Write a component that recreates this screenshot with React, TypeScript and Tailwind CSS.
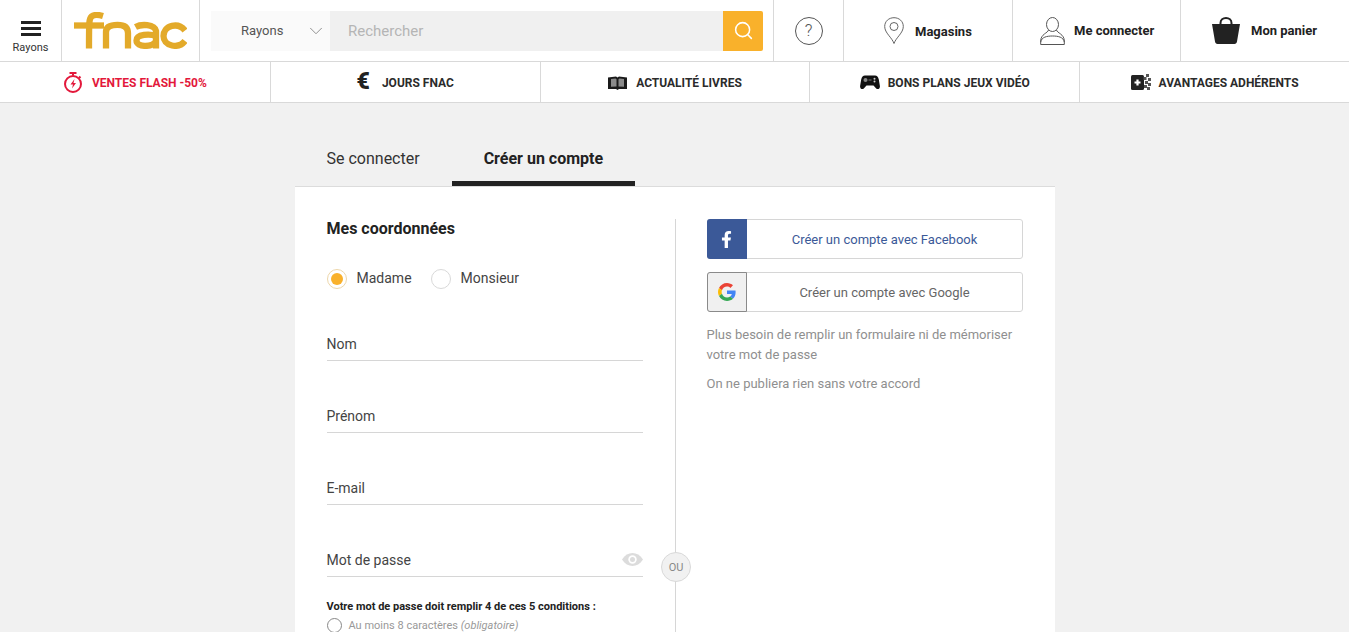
import { ChevronDown, Search } from "lucide-react";
import { FaFacebookF } from "react-icons/fa";

function FnacLogo() {
  return (
    <svg width="113" height="37" viewBox="0 0 113 37" fill="none" stroke="#e3aa2a" strokeWidth="6.300">
      {/* f */}
      <path d="M29 4 C25 2.800 20 2.500 17.500 4.500 C15 6.500 15 10 15 36.500" />
      <path d="M0 13.500 L30 13.500" />
      {/* n */}
      <path d="M32 36.500 L32 20 C32 14 38 12.800 43.500 12.800 C49 12.800 54 14.500 54 21 L54 36.500" />
      {/* a */}
      <path d="M61.500 15 C67 12 80.500 11.800 82 19 L82 36.500" />
      <path d="M82 24 C76 21.800 62.500 22 62.500 28.500 C62.500 35.500 78 35.500 82 29.500" />
      {/* c */}
      <path d="M111 18.500 C108 14.500 103 12.800 98 13.800 C92.500 15 89.500 19.500 89.500 24 C89.500 28.500 92.500 32.500 98 33.500 C103 34.500 108 33 111 29" />
    </svg>
  );
}

function PinIcon() {
  return (
    <svg width="20" height="27" viewBox="0 0 20 27" fill="none" stroke="#666" strokeWidth="1">
      <path d="M10 26.500 C8 20.500 .700 16 .700 9.500 C.700 4.300 4.800 .700 10 .700 C15.200 .700 19.300 4.300 19.300 9.500 C19.300 16 12 20.500 10 26.500 Z" />
      <circle cx="10" cy="9.500" r="4" />
    </svg>
  );
}

function UserIcon() {
  return (
    <svg width="25" height="28" viewBox="0 0 25 28" fill="none" stroke="#555" strokeWidth="1">
      <ellipse cx="12.500" cy="7.500" rx="6" ry="7" />
      <path d="M8.500 13 C8 16 .700 17 .700 24 L.700 27.500 L24.300 27.500 L24.300 24 C24.300 17 17 16 16.500 13" />
      <path d="M.700 25 C1.500 20 7 19 12.500 19 C18 19 23.500 20 24.300 25" />
    </svg>
  );
}

function BagIcon() {
  return (
    <svg width="28" height="27" viewBox="0 0 28 27" fill="none">
      <path d="M8.500 9 L8.500 6 C8.500 2.800 11 1 14 1 C17 1 19.500 2.800 19.500 6 L19.500 9" stroke="#222" strokeWidth="2" />
      <path d="M0 7 L28 7 L25 24.500 C24.800 26 23.800 27 22.500 27 L5.500 27 C4.200 27 3.200 26 3 24.500 Z" fill="#222" />
    </svg>
  );
}

function FlashIcon() {
  return (
    <svg width="20" height="21" viewBox="0 0 20 21" fill="none" stroke="#e3183b" strokeWidth="2">
      <path d="M6.500 1 L13.500 1 M10 1 L10 3.500 M16 4.500 L17.500 6" />
      <circle cx="10" cy="12" r="8" />
      <path d="M11.500 7 L7.500 12.500 L10 12.500 L9 16.500 L13 11 L10.500 11 Z" fill="#e3183b" stroke="none" />
    </svg>
  );
}

function BookIcon() {
  return (
    <svg width="19" height="14" viewBox="0 0 19 14">
      <path d="M0 1.500 L8 .500 L9.500 1.500 L11 .500 L19 1.500 L19 13 L11 13 L9.500 14 L8 13 L0 13 Z" fill="#1a1a1a" />
      <path d="M3 3 L7.500 2.500 L8.500 3.200 L8.500 10.500 L3 10.800 Z M16 3 L11.500 2.500 L10.500 3.200 L10.500 10.500 L16 10.800 Z" fill="#8a8a8a" />
    </svg>
  );
}

function GamepadIcon() {
  return (
    <svg width="20" height="15" viewBox="0 0 20 15">
      <path d="M5 .500 L15 .500 C17 .500 18.200 2 18.800 4.500 L19.900 11 C20.200 13.500 18 15 16.200 13.500 L13.500 10.500 L6.500 10.500 L3.800 13.500 C2 15 -.200 13.500 .100 11 L1.200 4.500 C1.800 2 3 .500 5 .500 Z" fill="#111" />
      <circle cx="5.500" cy="5" r="2" fill="#888" />
      <circle cx="14.500" cy="3.800" r="1" fill="#ccc" />
      <circle cx="14.500" cy="6.500" r="1" fill="#ccc" />
      <rect x="8.500" y="4.500" width="3" height="1" fill="#777" />
    </svg>
  );
}

function AdherentIcon() {
  return (
    <svg width="20" height="17" viewBox="0 0 20 17">
      <rect x="0" y="1" width="13" height="15" rx="1.500" fill="#222" />
      <path d="M3.500 8.500 L9.500 8.500 M6.500 5.500 L6.500 11.500" stroke="#fff" strokeWidth="2.200" />
      <g fill="#555">
        <rect x="15" y="0" width="3" height="3" />
        <rect x="12.500" y="3" width="3" height="3" />
        <rect x="17" y="4" width="3" height="3" />
        <rect x="14" y="7" width="3" height="3" />
        <rect x="17" y="9" width="3" height="3" />
        <rect x="13" y="11" width="3" height="3" />
        <rect x="16" y="13" width="3" height="3" />
      </g>
    </svg>
  );
}

function EyeIcon() {
  return (
    <svg width="21" height="13" viewBox="0 0 21 13">
      <path d="M0 6.500 C3 2 6.500 0 10.500 0 C14.500 0 18 2 21 6.500 C18 11 14.500 13 10.500 13 C6.500 13 3 11 0 6.500 Z" fill="#dcdcdc" />
      <circle cx="10.500" cy="6.500" r="4.200" fill="#fff" />
      <circle cx="10.500" cy="6.500" r="2.500" fill="#dcdcdc" />
    </svg>
  );
}

function GoogleIcon() {
  return (
    <svg width="18" height="18" viewBox="0 0 48 48">
      <path fill="#EA4335" d="M24 9.500c3.500 0 6.700 1.300 9.100 3.500l6.800-6.800C35.800 2.400 30.200 0 24 0 14.600 0 6.500 5.400 2.600 13.200l7.900 6.200C12.400 13.600 17.700 9.500 24 9.500z" />
      <path fill="#4285F4" d="M47 24.500c0-1.600-.1-3.100-.4-4.500H24v9h12.900c-.6 3-2.200 5.500-4.700 7.200l7.600 5.900C44.300 37.900 47 31.800 47 24.500z" />
      <path fill="#FBBC05" d="M10.500 28.600c-.5-1.400-.8-3-.8-4.600s.3-3.200.8-4.600l-7.900-6.200C.9 16.500 0 20.100 0 24s.9 7.500 2.600 10.800l7.900-6.200z" />
      <path fill="#34A853" d="M24 48c6.500 0 11.900-2.100 15.900-5.800l-7.600-5.900c-2.100 1.400-4.900 2.300-8.200 2.300-6.300 0-11.600-4.200-13.500-9.900l-7.900 6.200C6.500 42.600 14.600 48 24 48z" />
    </svg>
  );
}

const navItems = [
  { label: "VENTES FLASH -50%", icon: <FlashIcon />, red: true, gap: "gap-[9px]" },
  { label: "JOURS FNAC", icon: <span className="-mt-[3px] text-[23px] leading-none font-black text-[#222]">€</span>, red: false, gap: "gap-[12px]" },
  { label: "ACTUALITÉ LIVRES", icon: <BookIcon />, red: false, gap: "gap-[9px]" },
  { label: "BONS PLANS JEUX VIDÉO", icon: <GamepadIcon />, red: false, gap: "gap-2" },
  { label: "AVANTAGES ADHÉRENTS", icon: <AdherentIcon />, red: false, gap: "gap-2" },
];

function Field({ label, eye }: { label: string; eye?: boolean }) {
  return (
    <div className="mt-[33px] flex h-[39px] items-center justify-between border-b border-[#d6d6d6] pt-[6px] text-sm text-[#444]">
      <span>{label}</span>
      {eye && (
        <span className="-mt-[2px]">
          <EyeIcon />
        </span>
      )}
    </div>
  );
}

export default function App() {
  return (
    <div className="h-screen overflow-hidden bg-[#f1f1f1] text-[#222]" style={{ fontFamily: "Roboto, sans-serif" }}>
      <header className="bg-white">
        <div className="flex h-[62px] border-b border-[#d9d9d9]">
          <div className="flex w-[62px] shrink-0 flex-col items-center border-r border-[#d9d9d9] pt-[21px]">
            <div className="flex w-5 flex-col gap-[3px]">
              <span className="h-[3px] bg-[#222]" />
              <span className="h-[3px] bg-[#222]" />
              <span className="h-[3px] bg-[#222]" />
            </div>
            <span className="mt-[5px] text-[11px] leading-[13px] text-[#333]">Rayons</span>
          </div>
          <div className="flex w-[138px] shrink-0 items-center border-r border-[#d9d9d9] pl-[12px]">
            <FnacLogo />
          </div>
          <div className="flex w-[574px] shrink-0 items-center border-r border-[#d9d9d9] pl-[11px] pr-[10px]">
            <div className="flex h-10 w-[119px] shrink-0 items-center justify-between bg-[#fafafa] pl-[30px] pr-[3px] text-[13px] text-[#555]">
              <span className="mt-[1px]">Rayons</span>
              <ChevronDown size={22} className="text-[#888]" strokeWidth={1} />
            </div>
            <div className="flex h-10 flex-1 items-center bg-[#f0f0f0] px-[18px] pt-[1px] text-[15px] text-[#b5b5b5]">Rechercher</div>
            <div className="flex h-10 w-10 shrink-0 items-center justify-center rounded-r-[2px] bg-[#f9b12b]">
              <Search size={21} className="text-white" strokeWidth={1.750} />
            </div>
          </div>
          <div className="flex w-[70px] shrink-0 items-center justify-center border-r border-[#d9d9d9]">
            <span className="flex h-[28px] w-[28px] items-center justify-center rounded-full border border-[#555] text-[17px] font-light text-[#555]">?</span>
          </div>
          <div className="flex w-[169px] shrink-0 items-center gap-[11px] border-r border-[#d9d9d9] pl-[40px] text-[13px] font-bold">
            <PinIcon />
            <span className="mt-[2px]">Magasins</span>
          </div>
          <div className="flex w-[168px] shrink-0 items-center gap-[9px] border-r border-[#d9d9d9] pl-[27px] text-[13px] font-bold">
            <UserIcon />
            <span>Me connecter</span>
          </div>
          <div className="flex flex-1 items-center gap-[11px] pl-[31px] text-[13px] font-bold">
            <BagIcon />
            <span>Mon panier</span>
          </div>
        </div>
        <nav className="grid h-[41px] grid-cols-5 border-b border-[#d9d9d9]">
          {navItems.map((item, i) => (
            <div
              key={item.label}
              className={`flex items-center justify-center ${item.gap} pt-[1px] text-[12px] font-bold ${item.red ? "text-[#e3183b]" : "text-[#2b2b2b]"} ${i > 0 ? "border-l border-[#d9d9d9]" : ""}`}
            >
              {item.icon}
              <span>{item.label}</span>
            </div>
          ))}
        </nav>
      </header>

      <main className="mx-auto w-[760px] pt-[33px]">
        <div className="flex h-[51px] border-b border-[#dcdcdc] text-base">
          <div className="px-8 pt-[11px] text-[#333]">Se connecter</div>
          <div className="h-[50px] border-b-[5px] border-[#222] px-8 pt-[11px] font-bold">Créer un compte</div>
        </div>
        <div className="relative flex h-[600px] bg-white px-8 pt-8">
          <div className="w-[349px] shrink-0 border-r border-[#d6d6d6] pr-8">
            <h2 className="text-base font-bold leading-[19px]">Mes coordonnées</h2>
            <div className="mt-[31px] flex items-center text-sm text-[#444]">
              <span className="flex h-5 w-5 items-center justify-center rounded-full border border-[#edd7ab]">
                <span className="h-3 w-3 rounded-full bg-[#f9b12b]" />
              </span>
              <span className="ml-[10px] -mt-[2px]">Madame</span>
              <span className="ml-[19px] h-5 w-5 rounded-full border border-[#d9d9d9]" />
              <span className="ml-[10px] -mt-[2px]">Monsieur</span>
            </div>
            <Field label="Nom" />
            <Field label="Prénom" />
            <Field label="E-mail" />
            <Field label="Mot de passe" eye />
            <p className="mt-[22px] text-[11px] font-bold leading-[15px]">Votre mot de passe doit remplir 4 de ces 5 conditions :</p>
            <div className="mt-[3px] flex items-center gap-[7px] text-[11px] text-[#999]">
              <span className="h-[15px] w-[15px] shrink-0 rounded-full border border-[#888] bg-white" />
              <span className="mt-[1px]">
                Au moins 8 caractères <em>(obligatoire)</em>
              </span>
            </div>
          </div>
          <div className="ml-[31px] w-[316px] shrink-0">
            <div className="flex h-10 items-center rounded-[3px] border border-[#d6d6d6] text-[13px] text-[#3b5998]">
              <span className="-m-px flex h-10 w-10 shrink-0 items-center justify-center rounded-l-[3px] bg-[#3b5998]">
                <FaFacebookF size={17} color="#fff" />
              </span>
              <span className="flex-1 pl-[2px] pt-[1px] text-center">Créer un compte avec Facebook</span>
            </div>
            <div className="mt-[13px] flex h-10 items-center rounded-[3px] border border-[#d6d6d6] text-[13px] text-[#666]">
              <span className="-m-px flex h-10 w-10 shrink-0 items-center justify-center rounded-l-[3px] border border-[#8a8a8a] bg-[#f0f0f0]">
                <GoogleIcon />
              </span>
              <span className="flex-1 pl-[2px] pt-[1px] text-center">Créer un compte avec Google</span>
            </div>
            <p className="mt-[13px] text-[13px] leading-[20px] text-[#8f8f8f]">
              Plus besoin de remplir un formulaire ni de mémoriser votre mot de passe
            </p>
            <p className="mt-[9px] text-[13px] leading-[20px] text-[#8f8f8f]">On ne publiera rien sans votre accord</p>
          </div>
          <span className="absolute left-[366px] top-[365px] flex h-[30px] w-[30px] items-center justify-center rounded-full border border-[#d9d9d9] bg-[#f1f1f1] pl-[1px] pt-[2px] text-[11px] text-[#888]">
            OU
          </span>
        </div>
      </main>
    </div>
  );
}
